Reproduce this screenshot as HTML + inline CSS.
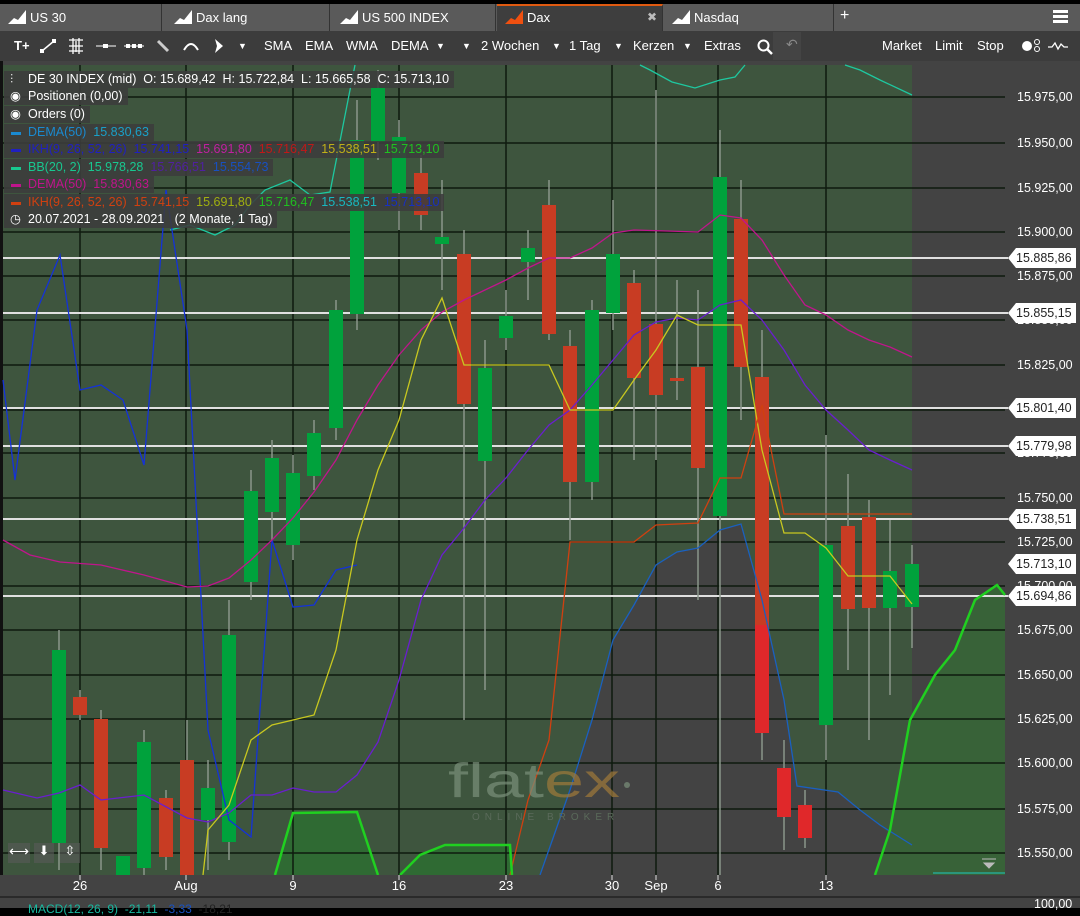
<!DOCTYPE html>
<html><head><meta charset="utf-8"><style>
*{margin:0;padding:0;box-sizing:border-box}
body{width:1080px;height:908px;background:#000;font-family:"Liberation Sans",sans-serif;overflow:hidden;position:relative;color:#fff}
.tabs{position:absolute;top:4px;left:0;width:1080px;height:27px;background:#5a5a5a}
.tab{position:absolute;top:0;height:27px;font-size:13px;line-height:27px;color:#fff;padding-left:30px;border-right:1px solid #333}
.tab svg{position:absolute;left:8px;top:6px}
.tb{position:absolute;top:31px;left:0;width:1080px;height:30px;background:#3c3c3c;font-size:13px}
.tb span{position:absolute;top:7px;color:#fff}
.lg{position:absolute;left:4px;font-size:12.5px;height:17px;line-height:17px;background:rgba(60,60,60,.88);padding:0 5px 0 24px;white-space:nowrap}
.ax{position:absolute;left:1017px;font-size:12.5px;color:#fff}
.pl{position:absolute;left:1008px;width:68px;height:20px;background:#fff;color:#222;font-size:12.5px;line-height:20px;padding-left:8px;clip-path:polygon(8px 0,100% 0,100% 100%,8px 100%,0 50%)}
.xl{position:absolute;top:878px;font-size:13px;color:#fff;transform:translateX(-50%)}
</style></head><body>
<div class="tabs">
 <div class="tab" style="left:0;width:162px">US 30<svg width="18" height="14"><path d="M0 14L6 8 10 10 18 0V14Z" fill="#fff"/></svg></div>
 <div class="tab" style="left:166px;width:164px">Dax lang<svg width="18" height="14"><path d="M0 14L6 8 10 10 18 0V14Z" fill="#fff"/></svg></div>
 <div class="tab" style="left:332px;width:164px">US 500 INDEX<svg width="18" height="14"><path d="M0 14L6 8 10 10 18 0V14Z" fill="#fff"/></svg></div>
 <div class="tab" style="left:497px;width:166px;background:#3e3e3e;border-top:2px solid #e05a10;line-height:23px">Dax<svg width="18" height="14" style="top:4px"><path d="M0 14L6 8 10 10 18 0V14Z" fill="#f05010"/></svg><span style="position:absolute;left:150px;color:#bbb;font-size:12px">✖</span></div>
 <div class="tab" style="left:664px;width:170px">Nasdaq<svg width="18" height="14"><path d="M0 14L6 8 10 10 18 0V14Z" fill="#fff"/></svg></div>
 <div style="position:absolute;left:840px;top:3px;font-size:16px">+</div>
 <div style="position:absolute;left:1053px;top:6px;width:15px;height:3px;background:#fff;box-shadow:0 5px 0 #fff,0 10px 0 #fff"></div>
</div>
<div class="tb">
 <span style="left:14px;font-weight:bold">T+</span>
 <svg style="position:absolute;left:40px;top:8px" width="16" height="14"><path d="M2 12L14 2" stroke="#fff" stroke-width="1.5"/><rect x="0" y="10" width="4" height="4" fill="#fff"/><rect x="12" y="0" width="4" height="4" fill="#fff"/></svg>
 <svg style="position:absolute;left:68px;top:7px" width="16" height="16"><path d="M1 2H15M1 8H15M1 13H15M5 0V16M8 3V14M11 0V16" stroke="#fff" stroke-width="1.3"/></svg>
 <svg style="position:absolute;left:96px;top:8px" width="20" height="14"><path d="M0 7H20" stroke="#fff"/><rect x="7" y="5" width="5" height="4" fill="#fff"/></svg>
 <svg style="position:absolute;left:124px;top:8px" width="20" height="14"><path d="M0 7H20" stroke="#fff"/><rect x="2" y="5" width="4" height="4" fill="#fff"/><rect x="8" y="5" width="4" height="4" fill="#fff"/><rect x="14" y="5" width="4" height="4" fill="#fff"/></svg>
 <svg style="position:absolute;left:156px;top:8px" width="14" height="14"><path d="M2 2L12 12" stroke="#ccc" stroke-width="3"/></svg>
 <svg style="position:absolute;left:182px;top:9px" width="18" height="12"><path d="M2 10Q9 -2 16 10" stroke="#fff" stroke-width="2" fill="none"/></svg>
 <svg style="position:absolute;left:214px;top:8px" width="10" height="14"><path d="M1 0L9 7 1 14 3 7Z" fill="#fff"/></svg>
 <span style="left:238px;font-size:9px;top:10px">▼</span>
 <span style="left:264px">SMA</span><span style="left:305px">EMA</span><span style="left:346px">WMA</span><span style="left:391px">DEMA</span>
 <span style="left:436px;font-size:9px;top:10px">▼</span>
 <span style="left:462px;font-size:9px;top:10px">▼</span><span style="left:481px">2 Wochen</span>
 <span style="left:552px;font-size:9px;top:10px">▼</span><span style="left:569px">1 Tag</span>
 <span style="left:614px;font-size:9px;top:10px">▼</span><span style="left:633px">Kerzen</span>
 <span style="left:683px;font-size:9px;top:10px">▼</span><span style="left:704px">Extras</span>
 <svg style="position:absolute;left:757px;top:8px" width="16" height="16"><circle cx="6.5" cy="6.5" r="5" stroke="#fff" stroke-width="2" fill="none"/><path d="M10 10L15 15" stroke="#fff" stroke-width="2.5"/></svg>
 <div style="position:absolute;left:773px;top:1px;width:28px;height:28px;background:#444"></div>
 <span style="left:786px;color:#888;font-size:14px;top:5px">↶</span>
 <span style="left:882px">Market</span><span style="left:935px">Limit</span><span style="left:977px">Stop</span>
 <svg style="position:absolute;left:1021px;top:8px" width="20" height="14"><circle cx="6" cy="7" r="5" fill="#fff"/><circle cx="16" cy="3" r="2.5" stroke="#fff" fill="none"/><circle cx="16" cy="10" r="2.5" stroke="#fff" fill="none"/></svg>
 <svg style="position:absolute;left:1048px;top:9px" width="20" height="12"><path d="M0 7H4L7 3 10 9 13 4 16 7H20" stroke="#fff" stroke-width="1.3" fill="none"/></svg>
</div>

<svg style="position:absolute;left:0;top:61px" width="1080" height="847" viewBox="0 61 1080 847">
<rect x="0" y="61" width="1080" height="847" fill="#434343"/>
<rect x="0" y="61" width="3" height="836" fill="#111"/>
<rect x="3" y="65" width="909" height="810" fill="#3e553e"/>
<polygon points="540,875 570,790 592,720 613,640 634,605 656,565 677,552 698,548 720,530 741,524 762,600 784,700 797,786 838,792 860,810 888,832 875,875" fill="#434343"/>
<polygon points="875,875 890,830 910,720 935,675 955,650 975,600 997,585 1005,595 1005,875" fill="#386238"/>
<polygon points="275,875 293,813 357,812 378,875" fill="#2f6a33"/>
<polygon points="400,875 420,855 445,845 510,845 512,875" fill="#2f6a33"/>
<g stroke="#0e1a0e" stroke-width="1.5">
<path d="M3 97H1005M3 143H1005M3 188H1005M3 232H1005M3 276H1005M3 320H1005M3 365H1005M3 410H1005M3 453H1005M3 498H1005M3 542H1005M3 586H1005M3 630H1005M3 675H1005M3 719H1005M3 763H1005M3 809H1005M3 853H1005"/>
<path d="M80 65V875M186 65V875M293 65V875M399 65V875M506 65V875M612 65V875M656 65V875M718 65V875M826 65V875"/>
</g>
<g stroke="#e0e0e0" stroke-width="2"><path d="M3 258H1008M3 313H1008M3 408H1008M3 446H1008M3 519H1008M3 596H1008"/></g>
<g stroke="#8a968a" stroke-width="1.5">
<path d="M59 630V870M80 690V720M101 710V870M144 730V875M166 790V870M187 720V875M208 760V870M229 600V860M251 470V600M272 440V540M293 455V560M314 420V490M336 300V440M357 100V330M378 70V160M399 120V230M421 155V230M442 180V290M464 230V720M485 340V690M506 290V350M528 230V300M549 180V340M570 330V540M592 300V500M613 200V330M634 270V460M656 90V460M677 280V400M698 290V600M720 130V875M741 180V420M762 330V760M784 740V850M805 790V848M826 435V760M848 474V670M869 500V740M890 520V695M912 545V648"/>
</g>
<g fill="#00a23c">
<rect x="52" y="650" width="14" height="193"/><rect x="116" y="856" width="14" height="19"/><rect x="137" y="742" width="14" height="126"/><rect x="201" y="788" width="14" height="32"/><rect x="222" y="635" width="14" height="207"/><rect x="244" y="491" width="14" height="91"/><rect x="265" y="458" width="14" height="54"/><rect x="286" y="473" width="14" height="72"/><rect x="307" y="433" width="14" height="43"/><rect x="329" y="310" width="14" height="118"/><rect x="350" y="140" width="14" height="174"/><rect x="371" y="88" width="14" height="54"/><rect x="392" y="137" width="14" height="56"/><rect x="435" y="237" width="14" height="7"/><rect x="478" y="368" width="14" height="93"/><rect x="499" y="316" width="14" height="22"/><rect x="521" y="248" width="14" height="14"/><rect x="585" y="310" width="14" height="172"/><rect x="606" y="254" width="14" height="59"/><rect x="713" y="177" width="14" height="339"/><rect x="819" y="545" width="14" height="180"/><rect x="883" y="571" width="14" height="37"/><rect x="905" y="564" width="14" height="43"/>
</g>
<g fill="#c83c23">
<rect x="73" y="697" width="14" height="18"/><rect x="94" y="719" width="14" height="129"/><rect x="159" y="798" width="14" height="59"/><rect x="180" y="760" width="14" height="115"/><rect x="414" y="173" width="14" height="42"/><rect x="457" y="254" width="14" height="150"/><rect x="542" y="205" width="14" height="129"/><rect x="563" y="346" width="14" height="136"/><rect x="627" y="283" width="14" height="95"/><rect x="649" y="324" width="14" height="71"/><rect x="670" y="378" width="14" height="3"/><rect x="691" y="367" width="14" height="101"/><rect x="734" y="219" width="14" height="148"/><rect x="755" y="377" width="14" height="250"/><rect x="841" y="526" width="14" height="83"/><rect x="862" y="517" width="14" height="91"/>
</g>
<g fill="#e0282a"><rect x="755" y="625" width="14" height="108"/><rect x="777" y="768" width="14" height="49"/><rect x="798" y="805" width="14" height="33"/></g>
<g fill="none" stroke-width="1.3">
<polyline stroke="#1ec8a0" points="170,230 190,225 215,235 235,225 250,205 265,190 290,180 310,195 330,192 350,90 355,65"/>
<polyline stroke="#1ec8a0" points="640,65 650,70 672,82 695,88 720,80 735,77 745,65"/>
<polyline stroke="#1ec8a0" points="845,65 860,70 880,80 912,95"/>
<polyline stroke="#1432d8" points="3,380 15,480 37,310 60,255 80,390 101,385 123,400 144,465 166,190 187,330 208,730 229,820 251,837 272,540 293,607 314,605 336,570 357,565"/>
<polyline stroke="#6a1ed0" points="3,790 37,798 59,793 80,785 101,800 144,795 187,818 208,822 229,813 251,795 272,795 293,788 314,792 336,792 357,775 378,742 399,680 421,600 442,555 464,528 485,500 506,478 528,450 549,425 570,410 592,385 613,360 634,335 656,322 677,318 698,320 720,305 741,300 762,320 784,350 805,385 826,410 848,430 869,450 890,460 912,470"/>
<polyline stroke="#c0158c" points="3,540 30,555 60,562 101,565 144,575 187,587 208,586 229,578 251,560 272,540 293,518 314,492 336,460 357,420 378,385 399,355 421,330 442,312 464,300 485,290 506,280 528,268 549,258 570,258 592,248 613,233 634,230 698,232 720,215 741,218 762,240 784,275 805,305 826,315 848,330 869,340 890,347 912,357"/>
<polyline stroke="#c8c820" points="203,875 208,830 229,805 251,740 272,725 293,720 314,715 336,650 357,540 378,470 399,420 421,340 442,298 464,365 549,365 570,410 613,410 634,380 656,350 677,315 698,325 741,325 762,450 784,533 805,533 826,548 848,576 890,576 912,604"/>
<polyline stroke="#d04010" points="510,875 528,800 549,740 570,542 634,542 656,525 698,523 720,478 741,478 762,405 784,514 912,514"/>
<polyline stroke="#1a60c0" points="540,875 570,790 592,720 613,640 634,605 656,565 677,552 698,548 720,530 741,524 762,600 784,700 797,786 838,792 860,810 880,825 912,845"/>
</g>
<g fill="none" stroke="#20d020" stroke-width="2.5">
<polyline points="275,875 293,813 357,812 378,875"/><polyline points="400,875 420,855 445,845 510,845 512,875"/>
<polyline points="875,875 890,830 910,720 935,675 955,650 975,600 997,585 1005,595"/>
</g>
<path d="M933 873H1005" stroke="#1ec8c0" stroke-width="1"/>
<path d="M982 859H996M984 863H994L989 868Z" stroke="#bbb" fill="#bbb"/>
<text x="448" y="797" font-family="Liberation Sans" font-size="48" fill="#7a907a" opacity=".7" textLength="172" lengthAdjust="spacingAndGlyphs">flat<tspan fill="#a07a3a">ex</tspan></text>
<circle cx="627" cy="785" r="3" fill="#7a907a" opacity=".7"/>
<text x="472" y="820" font-family="Liberation Sans" font-size="10" fill="#5a6a5a" letter-spacing="5">ONLINE BROKER</text>
<rect x="0" y="875" width="1080" height="22" fill="#434343"/>
<path d="M0 897H1080" stroke="#222" stroke-width="1.5"/>
<path d="M80 875V880M186 875V880M293 875V880M399 875V880M506 875V880M612 875V880M656 875V880M718 875V880M826 875V880" stroke="#ddd"/>
</svg>
<div style="position:absolute;left:8px;top:843px;width:22px;height:20px;background:rgba(90,90,90,.6);font-size:14px;text-align:center">⟷</div>
<div style="position:absolute;left:34px;top:843px;width:20px;height:20px;background:rgba(90,90,90,.6);font-size:13px;text-align:center">⬇</div>
<div style="position:absolute;left:60px;top:843px;width:20px;height:20px;background:rgba(90,90,90,.6);font-size:13px;text-align:center">⇳</div>

<div class="lg" style="top:71px">DE 30 INDEX (mid)&nbsp; O: 15.689,42&nbsp; H: 15.722,84&nbsp; L: 15.665,58&nbsp; C: 15.713,10<span style="position:absolute;left:6px">⫶</span></div>
<div class="lg" style="top:88px">Positionen (0,00)<span style="position:absolute;left:6px">◉</span></div>
<div class="lg" style="top:106px">Orders (0)<span style="position:absolute;left:6px">◉</span></div>
<div class="lg" style="top:124px;color:#1a8ad0">DEMA(50)&nbsp; <span style="color:#1aa0c8">15.830,63</span><span style="position:absolute;left:7px;top:8px;width:10px;height:3px;background:#1a8ad0"></span></div>
<div class="lg" style="top:141px;color:#2020c0">IKH(9, 26, 52, 26)&nbsp; 15.741,15&nbsp; <span style="color:#c020a0">15.691,80</span>&nbsp; <span style="color:#c01818">15.716,47</span>&nbsp; <span style="color:#c0b018">15.538,51</span>&nbsp; <span style="color:#20c020">15.713,10</span><span style="position:absolute;left:7px;top:8px;width:10px;height:3px;background:#2020c0"></span></div>
<div class="lg" style="top:159px;color:#18c890">BB(20, 2)&nbsp; 15.978,28&nbsp; <span style="color:#5020a0">15.766,51</span>&nbsp; <span style="color:#1850c0">15.554,73</span><span style="position:absolute;left:7px;top:8px;width:10px;height:3px;background:#18c890"></span></div>
<div class="lg" style="top:176px;color:#c0148c">DEMA(50)&nbsp; 15.830,63<span style="position:absolute;left:7px;top:8px;width:10px;height:3px;background:#c0148c"></span></div>
<div class="lg" style="top:194px;color:#d04010">IKH(9, 26, 52, 26)&nbsp; 15.741,15&nbsp; <span style="color:#a0b010">15.691,80</span>&nbsp; <span style="color:#20c020">15.716,47</span>&nbsp; <span style="color:#18b8c0">15.538,51</span>&nbsp; <span style="color:#1830c0">15.713,10</span><span style="position:absolute;left:7px;top:8px;width:10px;height:3px;background:#d04010"></span></div>
<div class="lg" style="top:211px">20.07.2021 - 28.09.2021&nbsp;&nbsp; (2 Monate, 1 Tag)<span style="position:absolute;left:6px">◷</span></div>

<div class="ax" style="top:90px">15.975,00</div><div class="ax" style="top:136px">15.950,00</div><div class="ax" style="top:181px">15.925,00</div><div class="ax" style="top:225px">15.900,00</div><div class="ax" style="top:269px">15.875,00</div><div class="ax" style="top:313px">15.850,00</div><div class="ax" style="top:358px">15.825,00</div><div class="ax" style="top:446px">15.775,00</div><div class="ax" style="top:491px">15.750,00</div><div class="ax" style="top:535px">15.725,00</div><div class="ax" style="top:579px">15.700,00</div><div class="ax" style="top:623px">15.675,00</div><div class="ax" style="top:668px">15.650,00</div><div class="ax" style="top:712px">15.625,00</div><div class="ax" style="top:756px">15.600,00</div><div class="ax" style="top:802px">15.575,00</div><div class="ax" style="top:846px">15.550,00</div>
<div class="pl" style="top:248px">15.885,86</div><div class="pl" style="top:303px">15.855,15</div><div class="pl" style="top:398px">15.801,40</div><div class="pl" style="top:436px">15.779,98</div><div class="pl" style="top:509px">15.738,51</div><div class="pl" style="top:554px">15.713,10</div><div class="pl" style="top:586px">15.694,86</div>

<div class="xl" style="left:80px">26</div><div class="xl" style="left:186px">Aug</div><div class="xl" style="left:293px">9</div><div class="xl" style="left:399px">16</div><div class="xl" style="left:506px">23</div><div class="xl" style="left:612px">30</div><div class="xl" style="left:656px">Sep</div><div class="xl" style="left:718px">6</div><div class="xl" style="left:826px">13</div>
<div style="position:absolute;left:28px;top:902px;font-size:12px;color:#18b8a0">MACD(12, 26, 9)&nbsp; -21,11&nbsp; <span style="color:#1850c0">-3,33</span>&nbsp; <span style="color:#222">-18,21</span></div>
<div style="position:absolute;left:1034px;top:897px;font-size:12.5px">100,00</div>
</body></html>
